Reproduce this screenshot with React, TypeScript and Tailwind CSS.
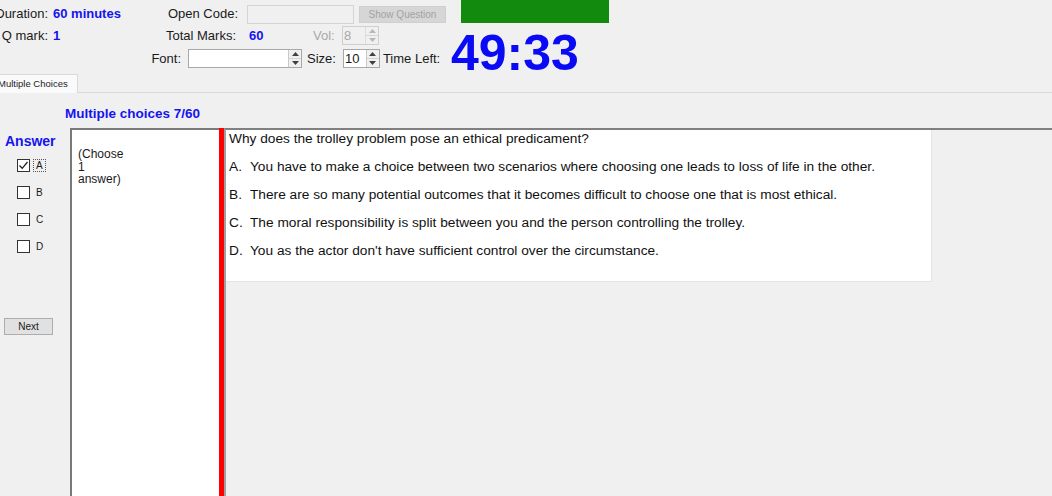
const BLUE = "text-[#1414ee]"

const Spin = ({ disabled }: { disabled?: boolean }) => (
  <div className={`flex flex-col w-[13px] h-full border-l ${disabled ? "border-[#dcdcdc]" : "border-[#c8c8c8]"}`}>
    <div className="flex-1 flex items-center justify-center bg-[#f0f0f0] border-b border-[#d4d4d4]">
      <svg width="7" height="4" viewBox="0 0 7 4">
        <path d="M0 4 L3.5 0 L7 4 Z" fill={disabled ? "#b8b8b8" : "#404040"} />
      </svg>
    </div>
    <div className="flex-1 flex items-center justify-center bg-[#f0f0f0]">
      <svg width="7" height="4" viewBox="0 0 7 4">
        <path d="M0 0 L3.5 4 L7 0 Z" fill={disabled ? "#b8b8b8" : "#404040"} />
      </svg>
    </div>
  </div>
)

const Check = ({ label, checked }: { label: string; checked?: boolean }) => (
  <div className="flex items-center h-[13px] pl-[17px]">
    <div className="w-[13px] h-[13px] border border-[#333] bg-white flex items-center justify-center">
      {checked && (
        <svg width="11" height="11" viewBox="0 0 11 11">
          <path d="M1.5 5.5 L4.2 8.3 L9.5 2" stroke="#222" strokeWidth="1.3" fill="none" />
        </svg>
      )}
    </div>
    <span
      className={`ml-[3px] px-[2px] text-[10px] leading-[11px] ${
        checked ? "border border-dotted border-[#555]" : "border border-transparent"
      }`}
    >
      {label}
    </span>
  </div>
)

const options = [
  ["A.", "You have to make a choice between two scenarios where choosing one leads to loss of life in the other."],
  ["B.", "There are so many potential outcomes that it becomes difficult to choose one that is most ethical."],
  ["C.", "The moral responsibility is split between you and the person controlling the trolley."],
  ["D.", "You as the actor don't have sufficient control over the circumstance."],
]

export default function App() {
  return (
    <div
      className="w-[1052px] h-[496px] overflow-hidden bg-[#f0f0f0] text-[#1a1a1a] flex flex-col"
      style={{ fontFamily: "'Liberation Sans', Arial, sans-serif" }}
    >
      {/* header */}
      <div className="flex h-[74px] shrink-0">
        <div className="w-[451px] shrink-0 flex flex-col text-[13px]">
          <div className="flex items-center h-[24px] pt-[4px]">
            <div className="w-[48px] flex justify-end whitespace-nowrap">Duration:</div>
            <div className={`ml-[5px] w-[107px] font-bold ${BLUE}`}>60 minutes</div>
            <div className="w-[78px] flex justify-end whitespace-nowrap">Open Code:</div>
            <div className="ml-[9px] w-[107px] h-[19px] border border-[#d4d4d4] bg-[#f0f0f0]" />
            <div className="ml-[5px] w-[87px] h-[17px] bg-[#d6d6d6] border border-[#cfcfcf] text-[10px] text-[#a3a3a3] flex items-center justify-center">
              Show Question
            </div>
          </div>
          <div className="flex items-center h-[22px] pt-[1px]">
            <div className="w-[48px] flex justify-end whitespace-nowrap">Q mark:</div>
            <div className={`ml-[5px] w-[109px] font-bold ${BLUE}`}>1</div>
            <div className="w-[74px] flex justify-end whitespace-nowrap">Total Marks:</div>
            <div className={`ml-[13px] w-[64px] font-bold ${BLUE}`}>60</div>
            <div className="w-[19px] text-[#a8a8a8]">Vol:</div>
            <div className="ml-[10px] w-[37px] h-[19px] border border-[#cfcfcf] flex">
              <div className="flex-1 pl-[1px] text-[#a8a8a8] leading-[17px]">8</div>
              <Spin disabled />
            </div>
          </div>
          <div className="flex items-center h-[24px] pt-[1px]">
            <div className="w-[181px] flex justify-end whitespace-nowrap">Font:</div>
            <div className="ml-[7px] w-[114px] h-[19px] border border-[#a8a8a8] bg-white flex justify-end">
              <Spin />
            </div>
            <div className="ml-[5px]">Size:</div>
            <div className="ml-[7px] w-[37px] h-[19px] border border-[#a8a8a8] bg-white flex">
              <div className="flex-1 pl-[1px] leading-[17px]">10</div>
              <Spin />
            </div>
            <div className="ml-[3px] whitespace-nowrap">Time Left:</div>
          </div>
        </div>
        <div className="flex flex-col">
          <div className="shrink-0 ml-[10px] w-[148px] h-[23px] bg-[#118a0e]" />
          <div className="shrink-0 mt-[5px] text-[50px] leading-[50px] font-bold text-[#0a0af5]">49:33</div>
        </div>
      </div>

      {/* tabs */}
      <div className="flex h-[19px] shrink-0 border-b border-[#d9d9d9]">
        <div className="w-[78px] h-[19px] bg-[#fafafa] border border-l-0 border-b-0 border-[#d9d9d9] text-[9.5px] flex items-center -indent-[2px] whitespace-nowrap">
          Multiple Choices
        </div>
      </div>

      <div className={`h-[35px] shrink-0 pl-[65px] pt-[7px] flex items-center text-[13.5px] font-bold ${BLUE}`}>
        Multiple choices 7/60
      </div>

      {/* main */}
      <div className="flex flex-1 min-h-0">
        <div className="w-[70px] shrink-0 flex flex-col">
          <div className={`pl-[5px] pt-[3px] text-[14px] font-bold ${BLUE}`}>Answer</div>
          <div className="mt-[7px] flex flex-col gap-[14px]">
            <Check label="A" checked />
            <Check label="B" />
            <Check label="C" />
            <Check label="D" />
          </div>
          <div className="ml-[4px] mt-[65px] w-[49px] h-[17px] bg-[#e1e1e1] border border-[#adadad] text-[10px] flex items-center justify-center">
            Next
          </div>
        </div>
        <div className="w-[149px] shrink-0 bg-white border-l-2 border-t-2 border-[#7a7a7a] pl-[6px] pt-[18px] text-[12px] leading-[12.5px]">
          <div>(Choose</div>
          <div>1</div>
          <div>answer)</div>
        </div>
        <div className="w-[5px] shrink-0 bg-[#ff0000]" />
        <div className="flex-1 border-t-2 border-l-2 border-t-[#808080] border-l-[#a0a0a0] flex flex-col items-start">
          <div className="w-[706px] h-[152px] bg-white border-r border-b border-[#e4e4e4] pl-[3px] pt-[1px] text-[13.7px] text-[#111]">
            <div className="leading-[16px]">Why does the trolley problem pose an ethical predicament?</div>
            <div className="flex flex-col gap-[12px] mt-[12px]">
              {options.map(([k, t]) => (
                <div key={k} className="flex leading-[16px] whitespace-nowrap">
                  <span className="w-[21px] shrink-0">{k}</span>
                  <span>{t}</span>
                </div>
              ))}
            </div>
          </div>
        </div>
      </div>
    </div>
  )
}
